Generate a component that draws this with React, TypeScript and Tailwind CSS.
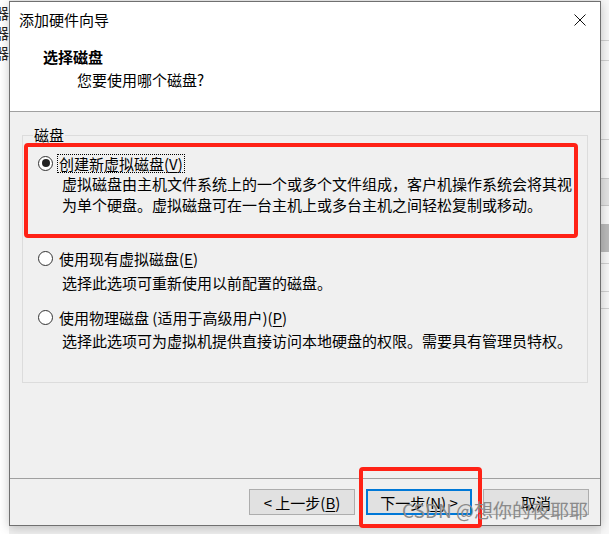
import React from "react"

function Radio({ checked }: { checked?: boolean }) {
  return (
    <span className="w-[15px] h-[15px] shrink-0 rounded-full border-[1.5px] border-[#333333] bg-white flex items-center justify-center">
      {checked && <span className="w-[8px] h-[8px] rounded-full bg-[#222222]" />}
    </span>
  )
}

function Option({
  checked,
  focused,
  label,
  keyChar,
  children,
  className,
}: {
  checked?: boolean
  focused?: boolean
  label: string
  keyChar: string
  children: React.ReactNode
  className?: string
}) {
  return (
    <div className={className}>
      <div className="flex items-center h-[20px]">
        <Radio checked={checked} />
        <span
          className={
            focused
              ? "ml-[4px] px-[1px] leading-[17px] border border-dotted border-black"
              : "ml-[4px] px-[1px] leading-[17px] border border-transparent"
          }
        >
          {label}(<span className="underline underline-offset-2">{keyChar}</span>)
        </span>
      </div>
      <div className="pl-[24px] leading-[21px]">{children}</div>
    </div>
  )
}

export default function App() {
  return (
    <div className="relative w-[609px] h-[534px] overflow-hidden flex bg-[#f0f0f0] text-[15px] text-black font-['Microsoft_YaHei_UI','Noto_Sans_CJK_SC',sans-serif]">
      {/* window behind, left edge */}
      <div className="w-[9px] h-full bg-white flex flex-col items-end pt-[3px] leading-[20px] overflow-hidden text-[#222]">
        <span>器</span>
        <span>器</span>
        <span>器</span>
      </div>

      {/* dialog */}
      <div className="relative z-10 mt-[1px] w-[592px] h-[525px] shrink-0 border border-[#707070] bg-[#f0f0f0] flex flex-col shadow-[0_2px_10px_rgba(0,0,0,0.22)]">
        <div className="h-[110px] shrink-0 bg-white border-b border-[#a0a0a0]">
          <div className="h-[36px] flex items-center justify-between pl-[9px] pr-[14px]">
            <span>添加硬件向导</span>
            <svg width="12" height="12" viewBox="0 0 12 12">
              <path d="M0.5 0.5 L11.5 11.5 M11.5 0.5 L0.5 11.5" stroke="#111" strokeWidth="1" fill="none" />
            </svg>
          </div>
          <div className="pl-[33px] mt-[9px] leading-[20px] font-bold">选择磁盘</div>
          <div className="pl-[67px] mt-[3px] leading-[20px]">您要使用哪个磁盘?</div>
        </div>

        <div className="flex-1 px-[12px] pt-[15px]">
          <fieldset className="h-[256px] border border-[#dcdcdc] p-0 m-0">
            <legend className="ml-[10px] px-[1px] leading-[16px]">磁盘</legend>
            <div className="pl-[15px] pt-[10px]">
              <Option checked focused label="创建新虚拟磁盘" keyChar="V">
                虚拟磁盘由主机文件系统上的一个或多个文件组成，客户机操作系统会将其视
                <br />
                为单个硬盘。虚拟磁盘可在一台主机上或多台主机之间轻松复制或移动。
              </Option>
              <Option className="mt-[33px]" label="使用现有虚拟磁盘" keyChar="E">
                <div className="mt-[4px]">选择此选项可重新使用以前配置的磁盘。</div>
              </Option>
              <Option className="mt-[14px]" label="使用物理磁盘 (适用于高级用户)" keyChar="P">
                <div className="mt-[3px]">选择此选项可为虚拟机提供直接访问本地硬盘的权限。需要具有管理员特权。</div>
              </Option>
            </div>
          </fieldset>
        </div>

        <div className="h-[47px] shrink-0 border-t border-[#a0a0a0] flex justify-end items-start pt-[10px] pr-[11px] gap-[11px]">
          <button className="w-[106px] h-[26px] bg-[#e1e1e1] border border-[#adadad] flex items-center justify-center leading-none">
            &lt; 上一步(<span className="underline underline-offset-2">B</span>)
          </button>
          <button className="w-[106px] h-[26px] bg-[#e1e1e1] border-2 border-[#0078d7] flex items-center justify-center leading-none">
            下一步(<span className="underline underline-offset-2">N</span>) &gt;
          </button>
          <button className="w-[106px] h-[26px] bg-[#e1e1e1] border border-[#adadad] flex items-center justify-center leading-none">
            取消
          </button>
        </div>
      </div>

      {/* window behind, right edge */}
      <div className="flex-1 h-full bg-[#f7f7f7] flex flex-col">
        <div className="h-[41px] border-b border-[#d0d0d0]" />
        <div className="h-[20px] border-b border-[#d0d0d0]" />
        <div className="h-[79px] border-b border-[#d0d0d0]" />
        <div className="h-[38px]" />
        <div className="h-[28px] bg-[#e3e3e3] border-y border-[#c8c8c8]" />
        <div className="h-[18px]" />
        <div className="h-[28px] bg-[#b9b9b9]" />
        <div className="h-[12px] border-b border-[#d0d0d0]" />
        <div className="h-[28px] border-b border-[#d0d0d0]" />
        <div className="h-[17px] border-b border-[#d0d0d0]" />
      </div>

      {/* annotations */}
      <div className="absolute left-[24px] top-[143px] w-[554px] h-[95px] border-4 border-[#ff2216] rounded-[4px] z-20" />
      <div className="absolute left-[359px] top-[467px] w-[123px] h-[61px] border-4 border-[#ff2216] rounded-[4px] z-20" />
      <div className="absolute left-[402px] top-[498px] z-30 text-[19px] leading-[23px] text-[#8a8a8a] font-['Noto_Sans_CJK_SC',sans-serif]">
        CSDN @想你的夜耶耶
      </div>
    </div>
  )
}
